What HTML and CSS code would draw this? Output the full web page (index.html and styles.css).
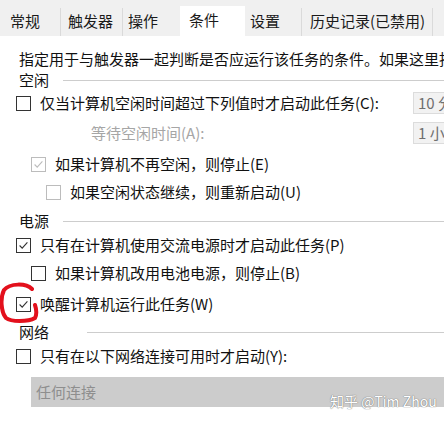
FILE: index.html
```html
<!DOCTYPE html>
<html lang="zh-CN">
<head>
  <meta charset="UTF-8">
  <title>条件</title>
  <link rel="stylesheet" href="styles.css">
</head>
<body>
  <div class="tabbar">
    <div class="tab t1">常规</div>
    <div class="tab t2">触发器</div>
    <div class="tab t3">操作</div>
    <div class="tab active">条件</div>
    <div class="tab t5">设置</div>
    <div class="tab t6">历史记录(已禁用)</div>
  </div>

  <div class="page">
    <div class="desc">指定用于与触发器一起判断是否应运行该任务的条件。如果这里指</div>

    <div class="group g-idle"><span>空闲</span><i class="rule"></i></div>
    <div class="row r-idle">
      <span class="box"></span>
      <span class="label">仅当计算机空闲时间超过下列值时才启动此任务(C):</span>
      <span class="combo-sm">10 分</span>
    </div>
    <div class="row r-wait">
      <span class="label muted wait">等待空闲时间(A):</span>
      <span class="combo-sm">1 小</span>
    </div>
    <div class="row r-stop lvl1">
      <span class="box checked disabled"><svg viewBox="0 0 15 15"><path d="M3 7.5 L6 10.5 L12 4"/></svg></span>
      <span class="label">如果计算机不再空闲，则停止(E)</span>
    </div>
    <div class="row r-restart lvl2">
      <span class="box disabled"></span>
      <span class="label">如果空闲状态继续，则重新启动(U)</span>
    </div>

    <div class="group g-power"><span>电源</span><i class="rule"></i></div>
    <div class="row r-ac">
      <span class="box checked"><svg viewBox="0 0 15 15"><path d="M3 7.5 L6 10.5 L12 4"/></svg></span>
      <span class="label">只有在计算机使用交流电源时才启动此任务(P)</span>
    </div>
    <div class="row r-battery lvl1">
      <span class="box"></span>
      <span class="label">如果计算机改用电池电源，则停止(B)</span>
    </div>
    <div class="row r-wake">
      <span class="box checked"><svg viewBox="0 0 15 15"><path d="M3 7.5 L6 10.5 L12 4"/></svg></span>
      <span class="label">唤醒计算机运行此任务(W)</span>
    </div>

    <div class="group g-net"><span>网络</span><i class="rule"></i></div>
    <div class="row r-net">
      <span class="box"></span>
      <span class="label">只有在以下网络连接可用时才启动(Y):</span>
    </div>
    <div class="combo-net">任何连接</div>
  </div>

  <svg class="mark" viewBox="0 0 44 44" width="44" height="44">
    <path d="M34 9 C 28 3, 12 3, 6 10 C 2 18, 3 32, 8 38 C 13 42, 30 42, 37 38 C 39 34, 38 28, 37 25"/>
  </svg>
  <div class="watermark">知乎 @Tim Zhou</div>
</body>
</html>
```

FILE: styles.css
```css
body {
  margin: 0;
  width: 444px;
  height: 422px;
  overflow: hidden;
  position: relative;
  background: #fff;
  color: #111;
  font-family: "Noto Sans CJK SC", "Liberation Sans", sans-serif;
  font-size: 15px;
  line-height: 20px;
}

.tabbar {
  height: 36px;
  background: #f0f0f0;
  display: flex;
  align-items: flex-end;
  white-space: nowrap;
}
.tab {
  height: 28px;
  line-height: 26px;
  border-right: 1px solid #dadada;
  box-sizing: border-box;
  color: #1a1a1a;
}
.t1 { width: 61px; padding-left: 10px; }
.t2 { width: 62px; padding-left: 7px; }
.t3 { width: 57px; padding-left: 5px; border-right: none; }
.tab.active {
  width: 65px;
  height: 31px;
  margin-bottom: -1px;
  padding-left: 9px;
  line-height: 27px;
  background: #fff;
  border-right: none;
}
.t5 { width: 57px; padding-left: 5px; }
.t6 { width: 131px; padding-left: 8px; }

.page {
  padding-left: 16px;
}
.desc {
  margin-top: 13px;
  padding-left: 3px;
  white-space: nowrap;
  overflow: hidden;
}

.group {
  display: flex;
  align-items: center;
  height: 20px;
  padding-left: 3px;
}
.group .rule {
  flex: 1;
  height: 0;
  border-top: 1px solid #cdcdcd;
  margin-left: 14px;
  margin-top: 1px;
}
.g-idle { margin-top: 1px; }
.g-power { margin-top: 9px; }
.g-net { margin-top: 8px; }
.g-net .rule { margin-left: 38px; }

.row {
  display: flex;
  align-items: center;
  height: 20px;
  white-space: nowrap;
}
.lvl1 { padding-left: 15px; }
.lvl2 { padding-left: 30px; }

.r-idle { height: 22px; margin-top: 2px; }
.r-wait { height: 22px; margin-top: 8px; }
.r-stop { margin-top: 10px; }
.r-restart { margin-top: 8px; }
.r-ac { margin-top: 4px; }
.r-battery { margin-top: 8px; }
.r-wake { margin-top: 11px; }
.r-net { margin-top: 4px; }

.box {
  width: 15px;
  height: 15px;
  box-sizing: border-box;
  border: 1px solid #333;
  background: #fff;
  margin-right: 9px;
  flex: none;
  display: flex;
}
.box svg {
  width: 13px;
  height: 13px;
}
.box path {
  fill: none;
  stroke: #333;
  stroke-width: 1.3;
}
.box.disabled {
  border-color: #bcbcbc;
}
.box.disabled path {
  stroke: #bcbcbc;
}

.muted { color: #a6a6a6; }
.wait { padding-left: 75px; }

.combo-sm {
  margin-left: auto;
  width: 31px;
  height: 22px;
  box-sizing: border-box;
  padding-left: 4px;
  background: #f2f2f2;
  border: 1px solid #dcdcdc;
  border-right: none;
  color: #6f6f6f;
  line-height: 20px;
  overflow: hidden;
}

.combo-net {
  margin-top: 11px;
  margin-left: 15px;
  height: 30px;
  line-height: 30px;
  padding-left: 5px;
  background: #cccccc;
  color: #8e8e8e;
}

.mark {
  position: absolute;
  left: -2px;
  top: 280px;
}
.mark path {
  fill: none;
  stroke: #e3101c;
  stroke-width: 4;
  stroke-linecap: round;
  stroke-linejoin: round;
}

.watermark {
  position: absolute;
  left: 330px;
  top: 391px;
  color: #fff;
  font-size: 14px;
  text-shadow: 0 0 1px #777, 0 0 1px #777;
}
```
